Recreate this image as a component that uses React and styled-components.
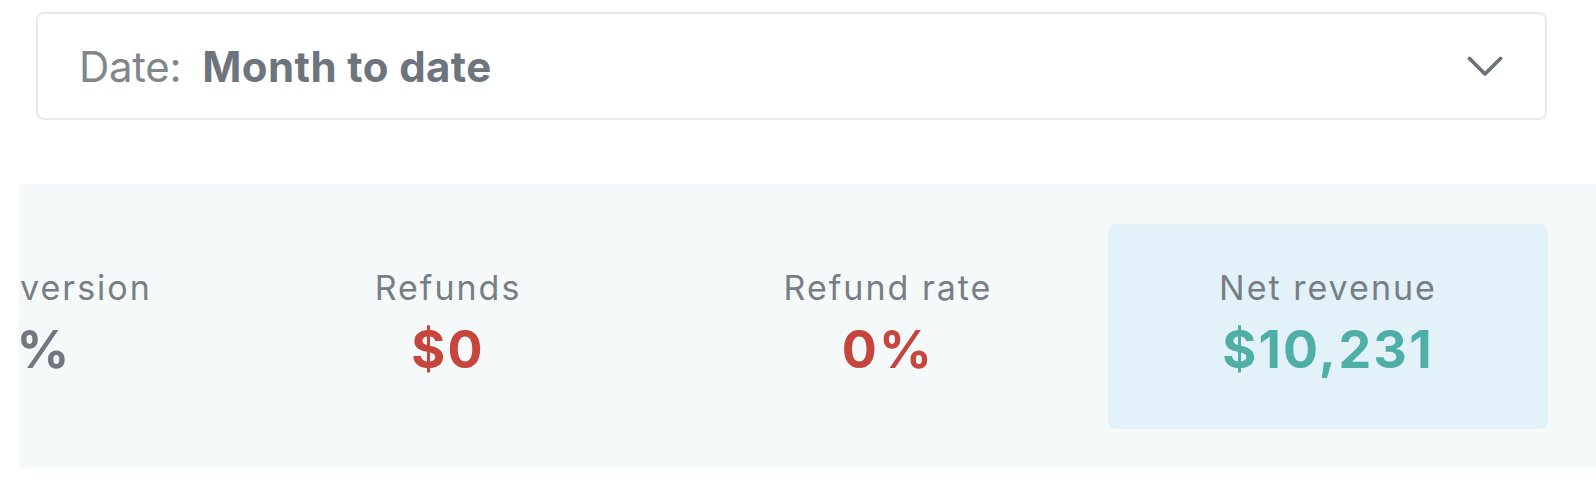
import { useLayoutEffect, useRef } from 'react';
import styled, { createGlobalStyle } from 'styled-components';

const stats = [
  { label: 'Trial conversion', value: '20%', tone: 'neutral' },
  { label: 'Refunds', value: '$0', tone: 'negative' },
  { label: 'Refund rate', value: '0%', tone: 'negative' },
  { label: 'Net revenue', value: '$10,231', tone: 'positive', active: true },
];

const toneColors = {
  neutral: '#71777e',
  negative: '#c6453c',
  positive: '#4faea5',
};

export default function App() {
  const stripRef = useRef(null);

  // the strip is scrolled so the last card sits flush on the right
  useLayoutEffect(() => {
    if (stripRef.current) {
      stripRef.current.scrollLeft = 231;
    }
  }, []);

  return (
    <>
      <GlobalStyle />
      <Page>
        <DateSelect>
          <DateLabel>Date:</DateLabel>
          <DateValue>Month to date</DateValue>
          <Chevron viewBox="0 0 36 23" width="36" height="23">
            <path d="M2.5 3.5 L18 19 L33.5 3.5" />
          </Chevron>
        </DateSelect>

        <StatsPanel ref={stripRef}>
          <StatsTrack>
            {stats.map((s) => (
              <Stat key={s.label} $active={s.active}>
                <StatLabel>{s.label}</StatLabel>
                <StatValue $tone={s.tone}>{s.value}</StatValue>
              </Stat>
            ))}
          </StatsTrack>
        </StatsPanel>
      </Page>
    </>
  );
}

const GlobalStyle = createGlobalStyle`
  html, body {
    margin: 0;
    background: #ffffff;
  }
  body {
    font-family: Inter, 'Liberation Sans', sans-serif;
    -webkit-font-smoothing: antialiased;
  }
`;

const Page = styled.div`
  width: 1596px;
  padding-top: 12px;
  overflow: hidden;
`;

const DateSelect = styled.div`
  box-sizing: border-box;
  margin: 0 49px 0 36px;
  height: 108px;
  border: 2px solid #e6eaec;
  border-radius: 8px;
  display: flex;
  align-items: center;
  padding: 0 42px 0 41px;
  gap: 21px;
`;

const DateLabel = styled.span`
  font-size: 42px;
  font-weight: 400;
  color: #80868c;
  letter-spacing: -0.3px;
`;

const DateValue = styled.span`
  font-size: 42px;
  font-weight: 700;
  color: #6e747b;
  letter-spacing: 0.4px;
  flex: 1;
`;

const Chevron = styled.svg`
  fill: none;
  stroke: #6b7177;
  stroke-width: 3.8;
  stroke-linecap: round;
  stroke-linejoin: round;
`;

const StatsPanel = styled.div`
  margin: 64px 0 0 19px;
  padding: 40px 0 39px;
  background: #f5f9fa;
  overflow-x: auto;
  scrollbar-width: none;
  &::-webkit-scrollbar {
    display: none;
  }
`;

const StatsTrack = styled.div`
  display: flex;
  width: max-content;
  padding-right: 48px;
`;

const Stat = styled.div`
  box-sizing: border-box;
  flex: 0 0 440px;
  height: 205px;
  padding-top: 44px;
  display: flex;
  flex-direction: column;
  align-items: center;
  border-radius: 8px;
  background: ${(p) => (p.$active ? '#e3f1f8' : 'transparent')};
`;

const StatLabel = styled.div`
  font-size: 34px;
  line-height: 40px;
  font-weight: 400;
  color: #787e85;
  letter-spacing: 2px;
  white-space: nowrap;
`;

const StatValue = styled.div`
  margin-top: 14px;
  font-size: 52px;
  line-height: 56px;
  font-weight: 700;
  letter-spacing: 2.2px;
  color: ${(p) => toneColors[p.$tone]};
  white-space: nowrap;
`;
